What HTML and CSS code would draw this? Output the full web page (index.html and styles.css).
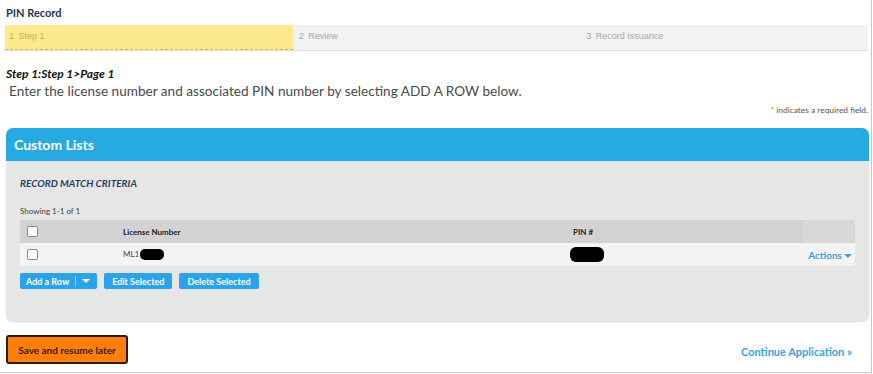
FILE: index.html
```html
<html>

<head>
  <title>PIN Record</title>
  <meta name="viewport" content="width=device-width, initial-scale=1">
  <link rel="stylesheet" href="styles.css">
</head>

<body>
  <div class="page">
    <h1 class="page-title">PIN Record</h1>

    <!-- Step bar -->
    <div class="steps">
      <div class="step active"><span class="step-num">1</span> Step 1</div>
      <div class="step"><span class="step-num">2</span> Review</div>
      <div class="step"><span class="step-num">3</span> Record Issuance</div>
    </div>

    <h2 class="step-heading">Step 1:Step 1&gt;Page 1</h2>
    <p class="instructions">Enter the license number and associated PIN number by selecting ADD A ROW below.</p>
    <p class="required-note"><span class="star">*</span> indicates a required field.</p>

    <!-- Custom Lists -->
    <div class="panel">
      <div class="panel-header">Custom Lists</div>
      <div class="panel-body">
        <h3 class="list-title">RECORD MATCH CRITERIA</h3>
        <div class="showing">Showing 1-1 of 1</div>
        <table class="grid">
          <tr class="head">
            <th class="col-check"><span class="checkbox"></span></th>
            <th class="col-license">License Number</th>
            <th class="col-pin">PIN #</th>
            <th class="col-actions"></th>
          </tr>
          <tr class="row">
            <td class="col-check"><span class="checkbox"></span></td>
            <td class="col-license">ML1<span class="redact redact-short"></span></td>
            <td class="col-pin"><span class="redact redact-pin"></span></td>
            <td class="col-actions"><a class="actions" href="#">Actions<span class="caret"></span></a></td>
          </tr>
        </table>
        <div class="toolbar">
          <button class="btn btn-split">Add a Row<span class="split-sep"></span><span class="caret white"></span></button>
          <button class="btn">Edit Selected</button>
          <button class="btn">Delete Selected</button>
        </div>
      </div>
    </div>

    <div class="footer-bar">
      <button class="save-btn">Save and resume later</button>
      <a class="continue" href="#">Continue Application &raquo;</a>
    </div>
  </div>
</body>

</html>
```

FILE: styles.css
```css
body {
  margin: 0;
  font-family: Lato, "Open Sans", sans-serif;
  background: #ffffff;
}

.page {
  width: 866px;
  height: 372px;
  padding: 0 0 0 5px;
  border-right: 1px solid #c8c8c8;
  border-bottom: 1px solid #c8c8c8;
  overflow: hidden;
}

.page-title {
  margin: 0;
  padding: 6px 0 0 1px;
  height: 19px;
  font-size: 11px;
  font-weight: bold;
  color: #1d3557;
}

.steps {
  display: grid;
  grid-template-columns: 1fr 1fr 1fr;
  width: 863px;
  height: 25px;
  background: #f2f2f2;
  border-bottom: 1px solid #e2e2e2;
}

.step {
  font-family: "Liberation Sans", Arial, sans-serif;
  font-size: 9px;
  color: #a8a8a8;
  padding: 6px 0 0 6px;
}

.step.active {
  background: #fde98e;
  color: #cdb450;
  border-bottom: 1px dashed #d6b73a;
  padding-left: 4px;
}

.step-num {
  margin-right: 2px;
}

.step-heading {
  margin: 0;
  padding: 15px 0 0 1px;
  font-size: 12px;
  font-style: italic;
  font-weight: bold;
  color: #111111;
}

.instructions {
  margin: 2px 0 0 4px;
  font-size: 13.6px;
  color: #4a4a4a;
}

.required-note {
  margin: 6px 3px 0 0;
  text-align: right;
  font-size: 8.4px;
  color: #555555;
}

.star {
  color: #e8720c;
}

.panel {
  width: 863px;
  margin: 13px 0 0 1px;
  border-radius: 7px;
  overflow: hidden;
  background: #e6e6e6;
  box-shadow: 0 1px 2px rgba(0, 0, 0, 0.15);
}

.panel-header {
  height: 33px;
  line-height: 33px;
  padding-left: 8px;
  background: #27a9e1;
  color: #ffffff;
  font-size: 14px;
  font-weight: bold;
}

.panel-body {
  height: 160px;
  padding: 0 14px 0 14px;
}

.list-title {
  margin: 0;
  padding-top: 16px;
  font-size: 10px;
  font-style: italic;
  font-weight: bold;
  color: #243f5f;
}

.showing {
  margin-top: 17px;
  font-size: 8px;
  color: #444444;
}

.grid {
  width: 835px;
  margin-top: 4px;
  border-collapse: collapse;
  font-size: 8px;
}

.grid th,
.grid td {
  height: 23px;
  padding: 0;
  text-align: left;
  vertical-align: middle;
}

.grid .head th {
  background: #d2d2d2;
  color: #222222;
  font-weight: bold;
}

.grid .head th.col-actions {
  background: #d8d8d8;
}

.grid .row td {
  background: #f4f4f4;
  color: #444444;
}

.col-check {
  width: 96px;
  padding-left: 7px !important;
}

.col-license {
  width: 450px;
}

.col-pin {
  width: 230px;
}

.col-actions {
  text-align: right !important;
  padding-right: 3px !important;
  white-space: nowrap;
}

.checkbox {
  display: inline-block;
  width: 9px;
  height: 9px;
  border: 1px solid #8a8a8a;
  border-radius: 2px;
  background: #ffffff;
  vertical-align: middle;
}

.redact {
  display: inline-block;
  background: #000000;
  vertical-align: middle;
}

.redact-short {
  width: 24px;
  height: 11px;
  border-radius: 5px;
  margin-left: 1px;
}

.redact-pin {
  width: 34px;
  height: 15px;
  border-radius: 6px;
  margin-left: -3px;
}

.actions {
  color: #3aa0e0;
  text-decoration: none;
  font-size: 10px;
  font-weight: bold;
  white-space: nowrap;
}

.caret {
  display: inline-block;
  width: 0;
  height: 0;
  margin-left: 2px;
  border-left: 4px solid transparent;
  border-right: 4px solid transparent;
  border-top: 4px solid #3aa0e0;
  vertical-align: middle;
}

.caret.white {
  border-top-color: #ffffff;
  margin: 0 7px 0 6px;
}

.toolbar {
  display: flex;
  gap: 7px;
  margin-top: 7px;
}

.btn {
  height: 16px;
  padding: 0 8px;
  border: none;
  border-radius: 2px;
  background: #2aa3eb;
  color: #ffffff;
  font-family: Lato, sans-serif;
  font-size: 9px;
  font-weight: bold;
  display: flex;
  align-items: center;
  cursor: pointer;
}

.btn-split {
  padding: 0 0 0 6px;
}

.split-sep {
  display: inline-block;
  width: 1px;
  height: 11px;
  background: #8fd0f5;
  margin-left: 6px;
}

.footer-bar {
  display: flex;
  justify-content: space-between;
  align-items: center;
  width: 846px;
  margin-top: 14px;
  padding-left: 1px;
}

.save-btn {
  width: 122px;
  height: 29px;
  background: #ff7f0a;
  border: 2px solid #2a1a0c;
  border-radius: 3px;
  color: #3b1900;
  font-family: Lato, sans-serif;
  font-size: 10px;
  font-weight: bold;
  cursor: pointer;
}

.continue {
  margin-top: 3px;
  color: #3aa0e0;
  text-decoration: none;
  font-size: 11px;
  font-weight: bold;
}
```
